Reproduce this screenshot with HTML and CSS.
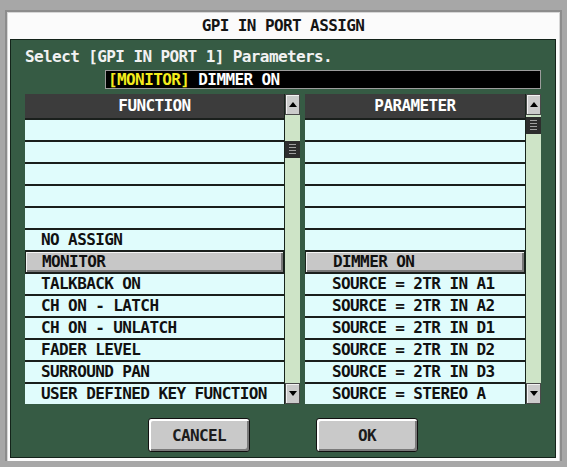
FILE: index.html
```html
<!DOCTYPE html>
<html lang="en">
<head>
    <meta charset="UTF-8">
    <meta name="viewport" content="width=device-width, initial-scale=1.0">
    <title>GPI IN PORT ASSIGN</title>
    <link rel="stylesheet" href="styles.css">
</head>
<body>
    <div class="window">
        <div class="title">GPI IN PORT ASSIGN</div>
        <div class="panel">
            <div class="prompt">Select [GPI IN PORT 1] Parameters.</div>
            <div class="current"><span class="cat">[MONITOR]</span> DIMMER ON</div>

            <div class="lists">
                <!-- function list -->
                <div class="listbox fn">
                    <div class="list">
                        <div class="head">FUNCTION</div>
                        <div class="row"></div>
                        <div class="row"></div>
                        <div class="row"></div>
                        <div class="row"></div>
                        <div class="row"></div>
                        <div class="row">NO ASSIGN</div>
                        <div class="row sel">MONITOR</div>
                        <div class="row">TALKBACK ON</div>
                        <div class="row">CH ON - LATCH</div>
                        <div class="row">CH ON - UNLATCH</div>
                        <div class="row">FADER LEVEL</div>
                        <div class="row">SURROUND PAN</div>
                        <div class="row">USER DEFINED KEY FUNCTION</div>
                    </div>
                    <div class="scroll">
                        <div class="arrow up"></div>
                        <div class="track"><div class="thumb"></div></div>
                        <div class="arrow down"></div>
                    </div>
                </div>

                <!-- parameter list -->
                <div class="listbox pm">
                    <div class="list">
                        <div class="head">PARAMETER</div>
                        <div class="row"></div>
                        <div class="row"></div>
                        <div class="row"></div>
                        <div class="row"></div>
                        <div class="row"></div>
                        <div class="row"></div>
                        <div class="row sel">DIMMER ON</div>
                        <div class="row">SOURCE = 2TR IN A1</div>
                        <div class="row">SOURCE = 2TR IN A2</div>
                        <div class="row">SOURCE = 2TR IN D1</div>
                        <div class="row">SOURCE = 2TR IN D2</div>
                        <div class="row">SOURCE = 2TR IN D3</div>
                        <div class="row">SOURCE = STEREO A</div>
                    </div>
                    <div class="scroll">
                        <div class="arrow up"></div>
                        <div class="track"><div class="thumb top"></div></div>
                        <div class="arrow down"></div>
                    </div>
                </div>
            </div>

            <div class="buttons">
                <button>CANCEL</button>
                <button>OK</button>
            </div>
        </div>
    </div>
</body>
</html>
```

FILE: styles.css
```css
* {
    box-sizing: border-box;
}
body {
    margin: 0;
    padding: 13px 8px 0;
    background: #a7a7a7;
    font-family: "DejaVu Sans Mono", monospace;
    font-weight: bold;
    font-size: 16px;
    letter-spacing: -0.6px;
}
.window {
    width: 551px;
    height: 448px;
    background: #fbfbfb;
    padding: 0 3px 3px 2px;
    box-shadow: 0 0 0 1px #d6d6d6, 0 0 0 3px #8c8c8c;
}
.title {
    height: 26px;
    line-height: 26px;
    text-align: center;
    color: #151515;
}
.panel {
    height: 419px;
    background: #365b44;
    border: 1px solid #14231a;
    padding: 6px 14px 0;
}
.prompt {
    height: 22px;
    line-height: 22px;
    color: #f2f2f2;
}
.current {
    margin: 2px 0 0 80px;
    height: 19px;
    line-height: 17px;
    padding-left: 2px;
    background: #000;
    border: 1px solid #9c9c9c;
    color: #fff;
}
.cat {
    color: #f4ec1c;
}
.lists {
    display: flex;
    gap: 5px;
    margin-top: 5px;
    height: 310px;
}
.listbox {
    display: flex;
}
.fn {
    width: 275px;
}
.pm {
    width: 236px;
}
.list {
    flex: 1;
    background: #18241c;
}
.head {
    height: 24px;
    line-height: 24px;
    background: #3c3c3c;
    color: #fff;
    text-align: center;
}
.row {
    height: 22px;
    line-height: 20px;
    border-top: 2px solid #1a1f1c;
    background: #e0fcfc;
    color: #111;
    padding-left: 16px;
    white-space: nowrap;
}
.pm .row {
    padding-left: 27px;
}
.row.sel {
    background: #c7c7c7;
    box-shadow: inset 1px 1px 0 #f4f4f4, inset -2px -2px 0 #777;
    margin: 0 1px;
}
.scroll {
    width: 16px;
    display: flex;
    flex-direction: column;
    background: #cee4c7;
    border-left: 1px solid #18241c;
}
.arrow {
    height: 21px;
    background: #cbcbcb;
    border: 1px solid #4a4a4a;
    box-shadow: inset 1px 1px 0 #f2f2f2;
    display: flex;
    align-items: center;
    justify-content: center;
}
.arrow::after {
    content: "";
    border-left: 4px solid transparent;
    border-right: 4px solid transparent;
}
.up::after {
    border-bottom: 5px solid #000;
}
.down::after {
    border-top: 5px solid #000;
}
.track {
    flex: 1;
}
.thumb {
    height: 17px;
    margin-top: 26px;
    background: #2d2d2d;
    padding: 3px 4px;
}
.thumb.top {
    margin-top: 2px;
}
.thumb::before {
    content: "";
    display: block;
    height: 11px;
    background: repeating-linear-gradient(#a0a0a0 0 1px, transparent 1px 3px);
}
.buttons {
    display: flex;
    justify-content: center;
    gap: 66px;
    margin-top: 14px;
}
button {
    width: 102px;
    height: 34px;
    background: #c9c9c9;
    border: 1px solid #111;
    border-radius: 3px;
    box-shadow: inset 2px 2px 0 #fff, inset -2px -2px 0 #7a7a7a;
    font: inherit;
    letter-spacing: -0.6px;
    color: #1c1c1c;
}
```
